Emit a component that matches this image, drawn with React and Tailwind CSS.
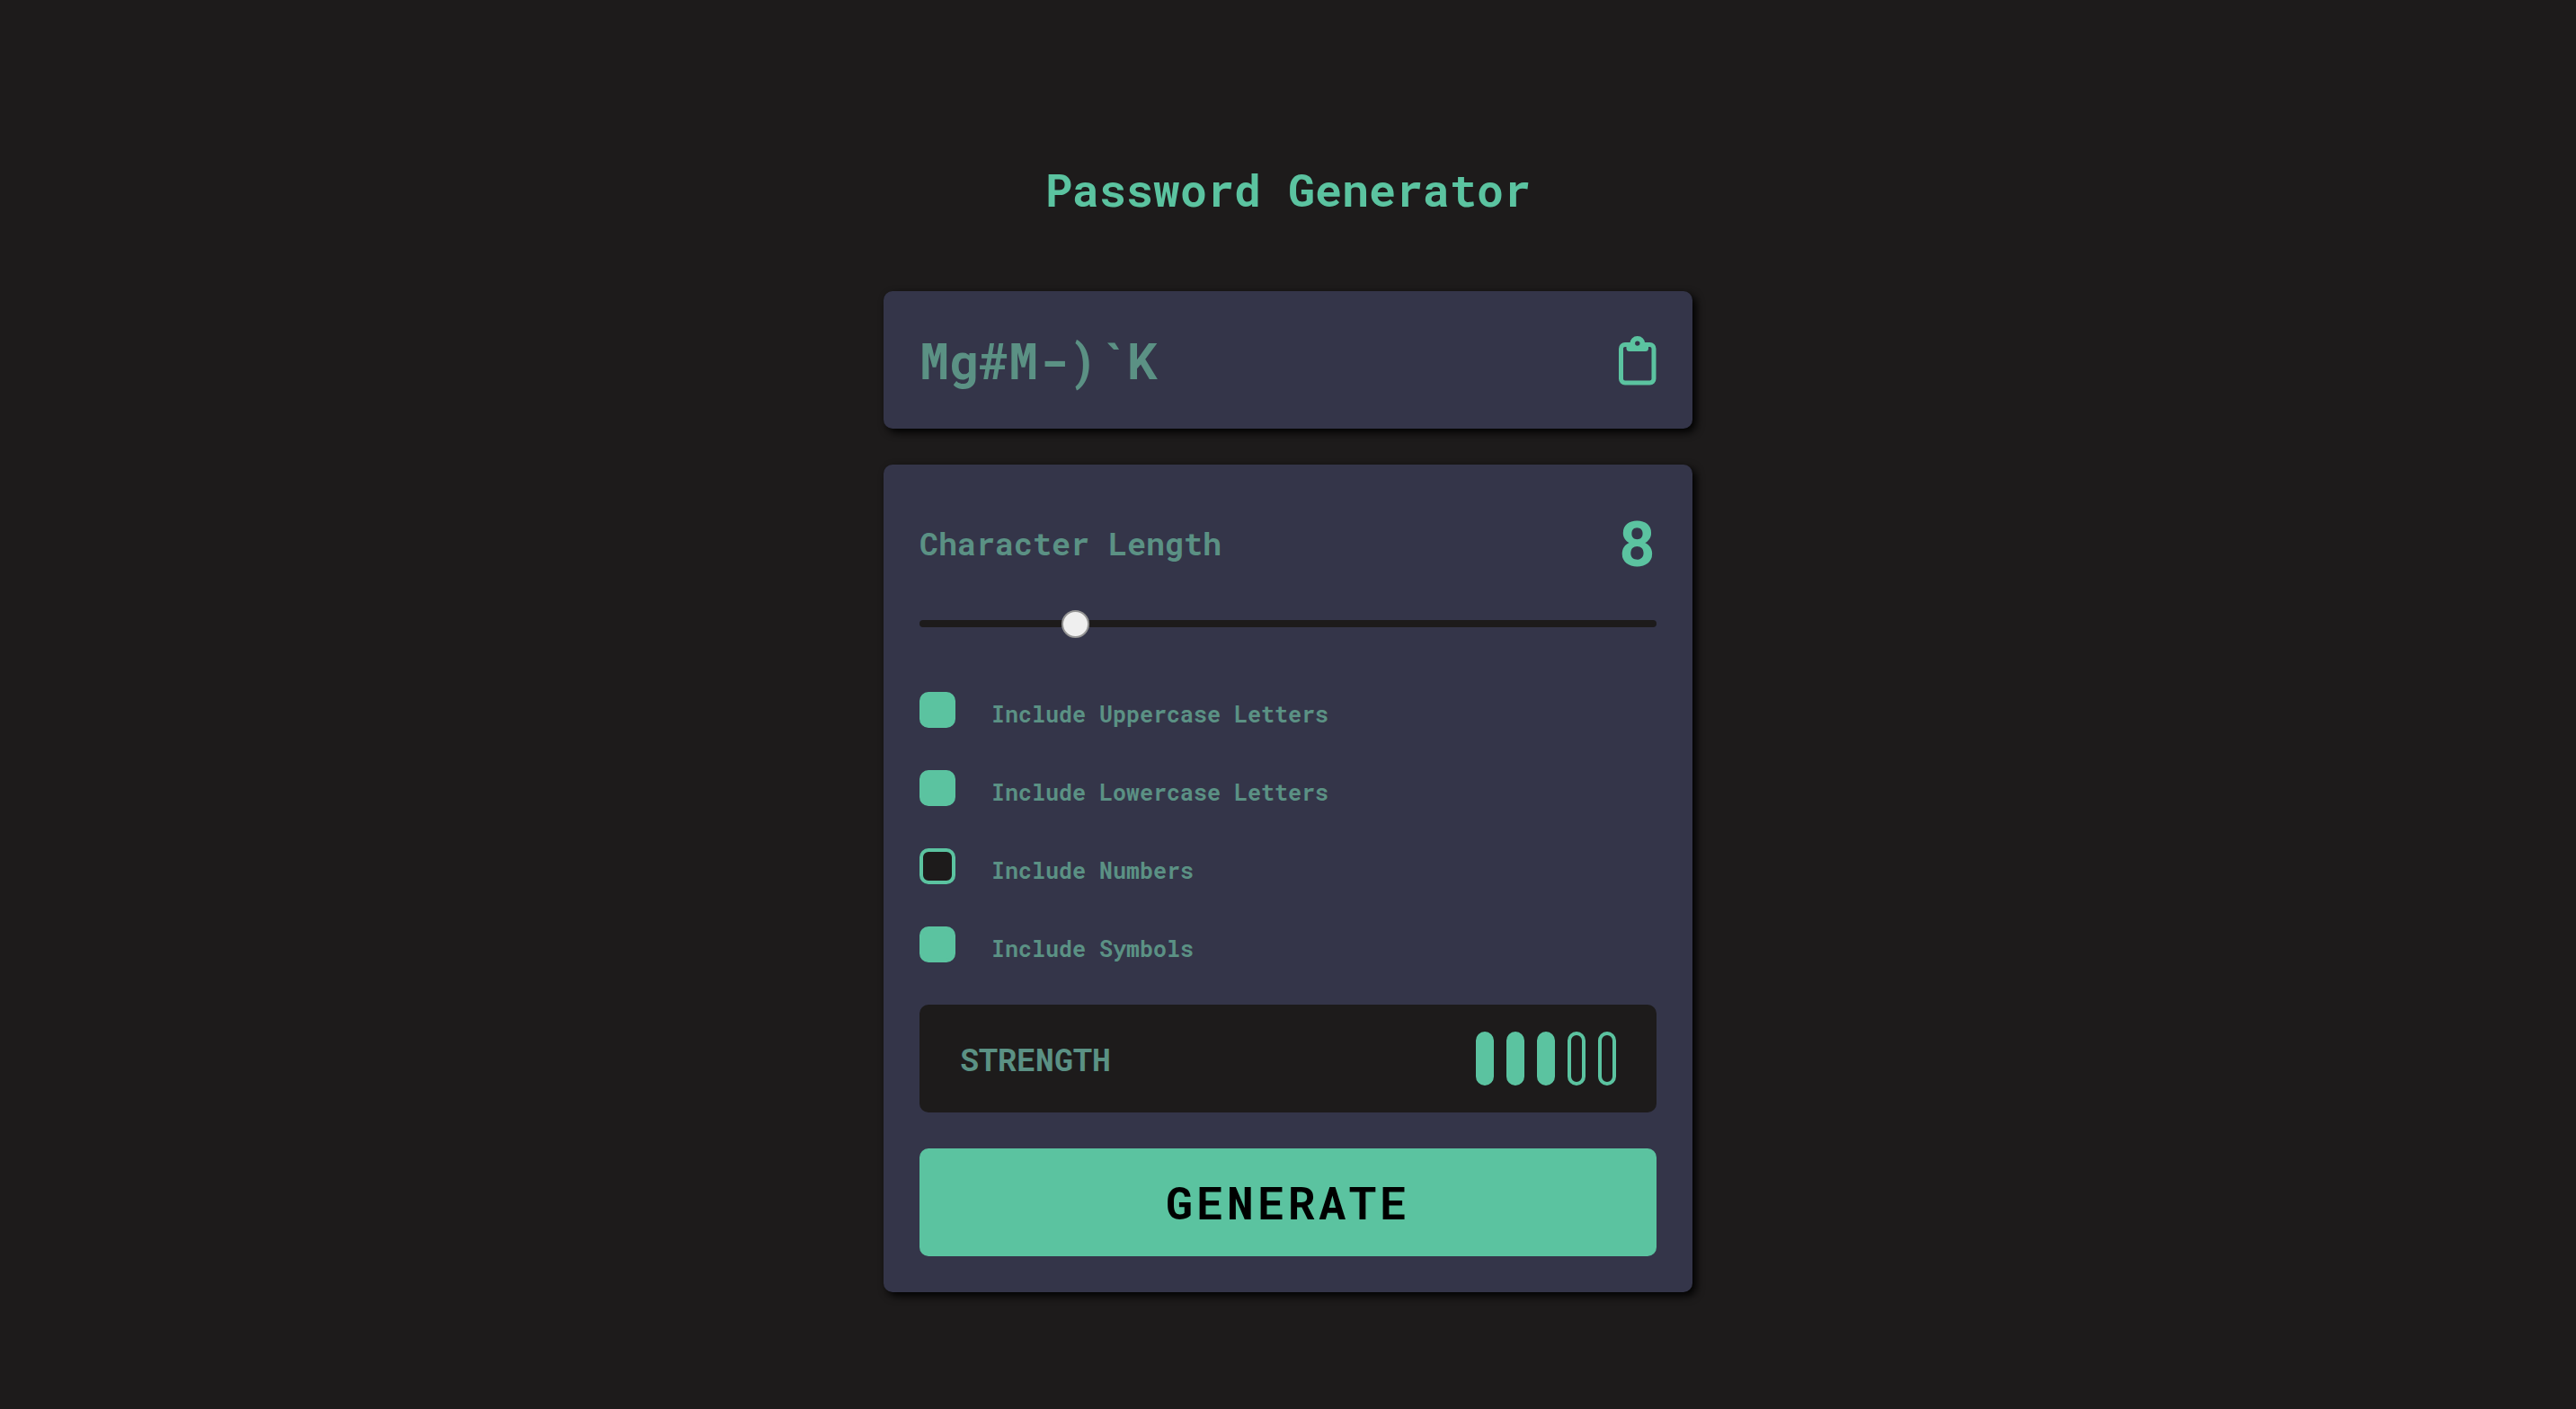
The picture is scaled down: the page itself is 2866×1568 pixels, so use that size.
import { useState } from "react";

const OPTIONS = [
  { id: "upper", label: "Include Uppercase Letters", on: true },
  { id: "lower", label: "Include Lowercase Letters", on: true },
  { id: "numbers", label: "Include Numbers", on: false },
  { id: "symbols", label: "Include Symbols", on: true },
];

const CARD = "rounded-[10px] bg-[#343549] shadow-[4px_4px_10px_0px_#000000]";

function ClipboardIcon() {
  return (
    <svg viewBox="0 0 42 56" className="h-14 w-[42px]" aria-hidden="true">
      <path
        d="M14 10.500H7A4.500 4.500 0 0 0 2.500 15V48.500A4.500 4.500 0 0 0 7 53H34.500A4.500 4.500 0 0 0 39 48.500V15A4.500 4.500 0 0 0 34.500 10.500H27.500"
        fill="none"
        stroke="currentColor"
        strokeWidth="5"
      />
      <path
        fill="currentColor"
        fillRule="evenodd"
        d="M8.500 12H12.300V9.500A8.500 8.500 0 0 1 29.300 9.500V12H33V14.500A3.500 3.500 0 0 1 29.500 18H12A3.500 3.500 0 0 1 8.500 14.500ZM20.800 6.400A2.700 2.700 0 1 0 20.800 11.800A2.700 2.700 0 1 0 20.800 6.400Z"
      />
    </svg>
  );
}

function Option({ id, label, on }) {
  return (
    <div className="flex h-10 items-center gap-10">
      <input
        id={id}
        type="checkbox"
        defaultChecked={on}
        className="size-10 shrink-0 appearance-none rounded-[10px] border-4 border-[#5bc3a0] bg-[#1d1b1b] checked:bg-[#5bc3a0]"
      />
      <label htmlFor={id} className="pt-[10px] text-[25px] leading-8 font-bold">
        {label}
      </label>
    </div>
  );
}

export default function App() {
  const [length, setLength] = useState(8);
  return (
    <main className="min-h-screen bg-[#1d1b1b] px-6 pt-[178px] pb-32 font-['Roboto_Mono','DejaVu_Sans_Mono',monospace] text-[#5b9184]">
      <div className="mx-auto flex max-w-[900px] flex-col">
        <h1 className="text-center text-[50px] leading-[66px] font-bold text-[#5bc3a0]">Password Generator</h1>

        <section className={`mt-20 flex items-center justify-between p-10 ${CARD}`}>
          <output className="text-[55px] leading-[73px] font-bold">Mg#M-)`K</output>
          <button type="button" aria-label="Copy password" className="text-[#5bc3a0]">
            <ClipboardIcon />
          </button>
        </section>

        <section className={`mt-10 flex flex-col p-10 ${CARD}`}>
          <div className="flex items-center justify-between">
            <label htmlFor="length" className="text-[35px] leading-[46px] font-bold">
              Character Length
            </label>
            <output htmlFor="length" className="text-[70px] leading-[93px] font-bold text-[#5bc3a0]">
              {length}
            </output>
          </div>
          <input
            id="length"
            type="range"
            min="0"
            max="40"
            value={length}
            onChange={(e) => setLength(Number(e.target.value))}
            className="mt-10 h-2 w-full appearance-none rounded-sm bg-[#1d1b1b] [&::-webkit-slider-thumb]:size-[31px] [&::-webkit-slider-thumb]:appearance-none [&::-webkit-slider-thumb]:rounded-full [&::-webkit-slider-thumb]:border-2 [&::-webkit-slider-thumb]:border-[#949494] [&::-webkit-slider-thumb]:bg-[#efefef]"
          />
          <div className="mt-[72px] flex flex-col gap-[47px]">
            {OPTIONS.map((o) => (
              <Option key={o.id} {...o} />
            ))}
          </div>
          <div className="mt-[47px] flex h-[120px] items-center justify-between rounded-[10px] bg-[#1d1b1b] px-[45px]">
            <span className="text-[35px] leading-[46px] font-bold">STRENGTH</span>
            <div className="flex gap-[14px]">
              {[1, 2, 3, 4, 5].map((n) => (
                <span
                  key={n}
                  className={`h-[60px] w-5 rounded-full border-4 border-[#5bc3a0] ${n <= 3 ? "bg-[#5bc3a0]" : ""}`}
                />
              ))}
            </div>
          </div>
          <button
            type="button"
            className="mt-10 h-[120px] rounded-[10px] bg-[#5bc3a0] text-[50px] leading-[66px] font-bold tracking-[4px] text-black"
          >
            GENERATE
          </button>
        </section>
      </div>
    </main>
  );
}
